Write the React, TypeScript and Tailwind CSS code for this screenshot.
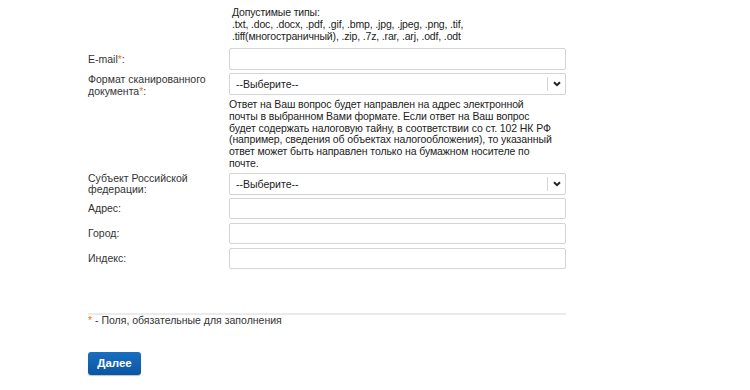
import React from "react";

const Star = () => <span className="text-[#e8792b]">*</span>;

const Input = ({ h = "h-[22px]" }: { h?: string }) => (
  <div className={`${h} w-[337px] rounded-[2px] border border-[#d4d4d4] bg-white`} />
);

const Select = () => (
  <div className="flex h-[22px] w-[337px] items-center rounded-[2px] border border-[#d4d4d4] bg-white">
    <span className="flex-1 pl-[6px] text-[#222]">--Выберите--</span>
    <div className="h-[14px] w-px bg-[#d4d4d4]" />
    <div className="flex w-[17px] items-center justify-center">
      <svg width="8" height="6" viewBox="0 0 8 6">
        <path d="M1 1.2 L4 4.2 L7 1.2" stroke="#222" strokeWidth="2" fill="none" />
      </svg>
    </div>
  </div>
);

export default function App() {
  return (
    <div
      className="h-[390px] w-[750px] overflow-hidden whitespace-nowrap bg-white text-[10.5px] leading-[12px] text-[#222]"
      style={{ fontFamily: '"Liberation Sans", Arial, sans-serif' }}
    >
      <div className="pl-[88px] pt-[6px]">
        <div className="ml-[144px] tracking-[-0.15px]">
          <div>Допустимые типы:</div>
          <div>.txt, .doc, .docx, .pdf, .gif, .bmp, .jpg, .jpeg, .png, .tif,</div>
          <div>.tiff(многостраничный), .zip, .7z, .rar, .arj, .odf, .odt</div>
        </div>

        <div className="mt-[6px] flex flex-col">
          <div className="flex items-center">
            <div className="w-[141px] text-[#333]">
              E-mail<Star />:
            </div>
            <Input />
          </div>
          <div className="mt-[3px] flex">
            <div className="w-[141px] text-[#333]">
              Формат сканированного
              <br />
              документа<Star />:
            </div>
            <div className="flex flex-col">
              <Select />
              <div className="mt-[4px] w-[337px] leading-[11.8px] tracking-[-0.1px]">
                Ответ на Ваш вопрос будет направлен на адрес электронной
                <br />
                почты в выбранном Вами формате. Если ответ на Ваш вопрос
                <br />
                будет содержать налоговую тайну, в соответствии со ст. 102 НК РФ
                <br />
                (например, сведения об объектах налогообложения), то указанный
                <br />
                ответ может быть направлен только на бумажном носителе по
                <br />
                почте.
              </div>
            </div>
          </div>
          <div className="mt-[3px] flex">
            <div className="w-[141px] leading-[11.5px] text-[#333]">
              Субъект Российской
              <br />
              федерации:
            </div>
            <Select />
          </div>
          <div className="mt-[2px] flex items-center">
            <div className="w-[141px] text-[#333]">Адрес:</div>
            <Input h="h-[21px]" />
          </div>
          <div className="mt-[4px] flex items-center">
            <div className="w-[141px] text-[#333]">Город:</div>
            <Input h="h-[21px]" />
          </div>
          <div className="mt-[4px] flex items-center">
            <div className="w-[141px] text-[#333]">Индекс:</div>
            <Input h="h-[21px]" />
          </div>
        </div>

        <div className="mt-[44px] h-[2px] w-[478px] bg-[#ebebeb]" />
        <div className="mt-[-1px] text-[#333]">
          <Star /> - Поля, обязательные для заполнения
        </div>
        <button className="mt-[26px] h-[23px] w-[53px] rounded-[3px] bg-gradient-to-b from-[#1a6fc0] to-[#0b55a3] text-[11.5px] font-bold text-white shadow-[0_1px_1px_rgba(0,0,0,0.25)]">
          Далее
        </button>
      </div>
    </div>
  );
}
